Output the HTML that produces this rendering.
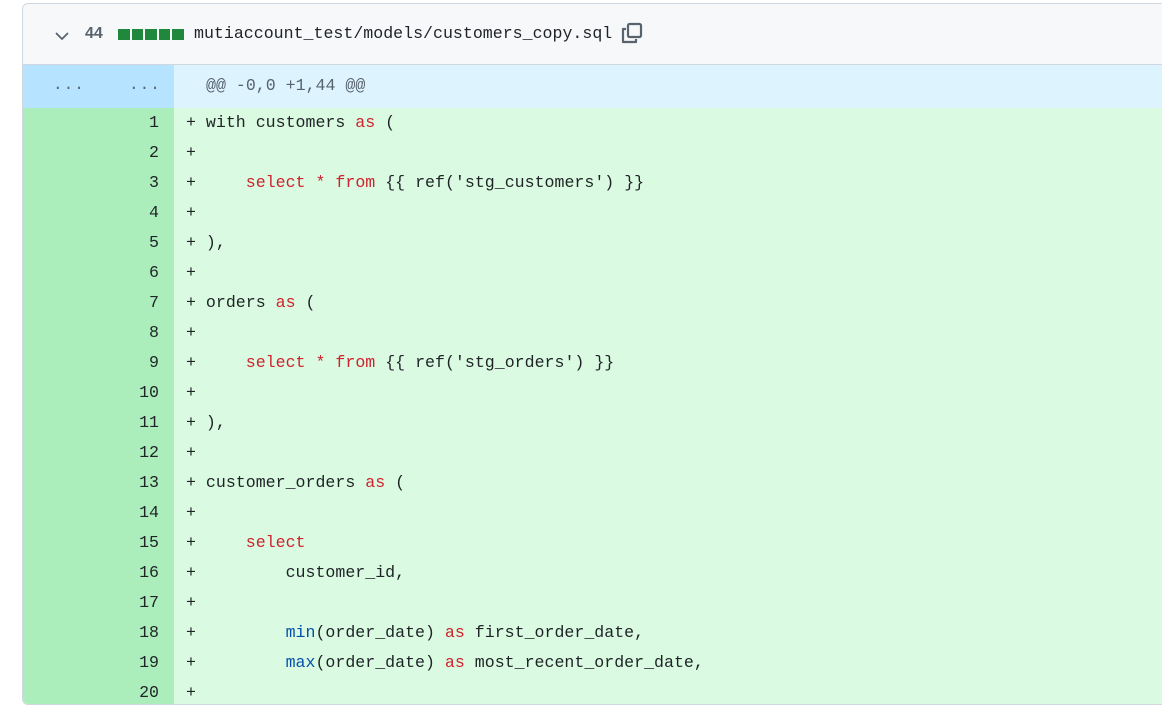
<!DOCTYPE html>
<html><head><style>
html,body{margin:0;background:#fff;width:1162px;height:678px;overflow:hidden;font-family:"Liberation Mono",monospace;}
.box{position:absolute;left:22px;top:3px;width:1160px;height:700px;border:1px solid #d0d7de;border-radius:6px;overflow:hidden;}
.hdr{height:60px;background:#f6f8fa;border-bottom:1px solid #d0d7de;position:relative;}
.hunk{height:43px;position:relative;background:#ddf4ff;}
.row{height:30px;position:relative;background:#dafbe1;font-size:16.6px;line-height:30px;color:#1f2328;}
.gut{position:absolute;left:0;top:0;width:151px;height:30px;background:#aceebb;}
.num{position:absolute;right:15px;top:0;}
.code{position:absolute;left:163px;top:0;white-space:pre;}
.k{color:#cf222e}.f{color:#0550ae}
</style></head><body>
<div class="box">
<div class="hdr">
<svg style="position:absolute;left:31px;top:24px" width="16" height="16" viewBox="0 0 16 16"><path d="M2.5 5.5 8 11l5.5-5.5" fill="none" stroke="#59636e" stroke-width="1.8" stroke-linecap="round" stroke-linejoin="round"/></svg>
<span style="position:absolute;left:62px;top:20px;font-family:'Liberation Sans',sans-serif;font-weight:bold;font-size:16px;color:#59636e;line-height:20px">44</span>
<div style="position:absolute;left:95px;top:25px;display:flex;gap:2px"><i style="width:11.5px;height:11px;background:#1f883d"></i><i style="width:11.5px;height:11px;background:#1f883d"></i><i style="width:11.5px;height:11px;background:#1f883d"></i><i style="width:11.5px;height:11px;background:#1f883d"></i><i style="width:11.5px;height:11px;background:#1f883d"></i></div>
<span style="position:absolute;left:171px;top:19px;font-size:16.6px;line-height:22px;color:#1f2328">mutiaccount_test/models/customers_copy.sql</span>
<svg style="position:absolute;left:597px;top:17px" width="24" height="24" viewBox="0 0 24 24" fill="none" stroke="#59636e" stroke-width="2.2" stroke-linejoin="round"><path d="M6 8H3v13h13v-3"/><rect x="8" y="3" width="13" height="13" rx="1.5"/></svg>
</div>
<div class="hunk">
<div style="position:absolute;left:0;top:0;width:151px;height:43px;background:#b6e3ff"></div>
<span style="position:absolute;left:30px;top:11px;font-size:16px;color:#59636e;letter-spacing:1px">...</span>
<span style="position:absolute;left:106px;top:11px;font-size:16px;color:#59636e;letter-spacing:1px">...</span>
<span style="position:absolute;left:183px;top:11px;font-size:16.6px;color:#59636e">@@ -0,0 +1,44 @@</span>
</div>
<div class="row"><div class="gut"><span class="num">1</span></div><span class="code">+ with customers <span class="k">as</span> (</span></div>
<div class="row"><div class="gut"><span class="num">2</span></div><span class="code">+</span></div>
<div class="row"><div class="gut"><span class="num">3</span></div><span class="code">+     <span class="k">select</span> <span class="k">*</span> <span class="k">from</span> {{ ref('stg_customers') }}</span></div>
<div class="row"><div class="gut"><span class="num">4</span></div><span class="code">+</span></div>
<div class="row"><div class="gut"><span class="num">5</span></div><span class="code">+ ),</span></div>
<div class="row"><div class="gut"><span class="num">6</span></div><span class="code">+</span></div>
<div class="row"><div class="gut"><span class="num">7</span></div><span class="code">+ orders <span class="k">as</span> (</span></div>
<div class="row"><div class="gut"><span class="num">8</span></div><span class="code">+</span></div>
<div class="row"><div class="gut"><span class="num">9</span></div><span class="code">+     <span class="k">select</span> <span class="k">*</span> <span class="k">from</span> {{ ref('stg_orders') }}</span></div>
<div class="row"><div class="gut"><span class="num">10</span></div><span class="code">+</span></div>
<div class="row"><div class="gut"><span class="num">11</span></div><span class="code">+ ),</span></div>
<div class="row"><div class="gut"><span class="num">12</span></div><span class="code">+</span></div>
<div class="row"><div class="gut"><span class="num">13</span></div><span class="code">+ customer_orders <span class="k">as</span> (</span></div>
<div class="row"><div class="gut"><span class="num">14</span></div><span class="code">+</span></div>
<div class="row"><div class="gut"><span class="num">15</span></div><span class="code">+     <span class="k">select</span></span></div>
<div class="row"><div class="gut"><span class="num">16</span></div><span class="code">+         customer_id,</span></div>
<div class="row"><div class="gut"><span class="num">17</span></div><span class="code">+</span></div>
<div class="row"><div class="gut"><span class="num">18</span></div><span class="code">+         <span class="f">min</span>(order_date) <span class="k">as</span> first_order_date,</span></div>
<div class="row"><div class="gut"><span class="num">19</span></div><span class="code">+         <span class="f">max</span>(order_date) <span class="k">as</span> most_recent_order_date,</span></div>
<div class="row"><div class="gut"><span class="num">20</span></div><span class="code">+</span></div>
</div>
</body></html>
